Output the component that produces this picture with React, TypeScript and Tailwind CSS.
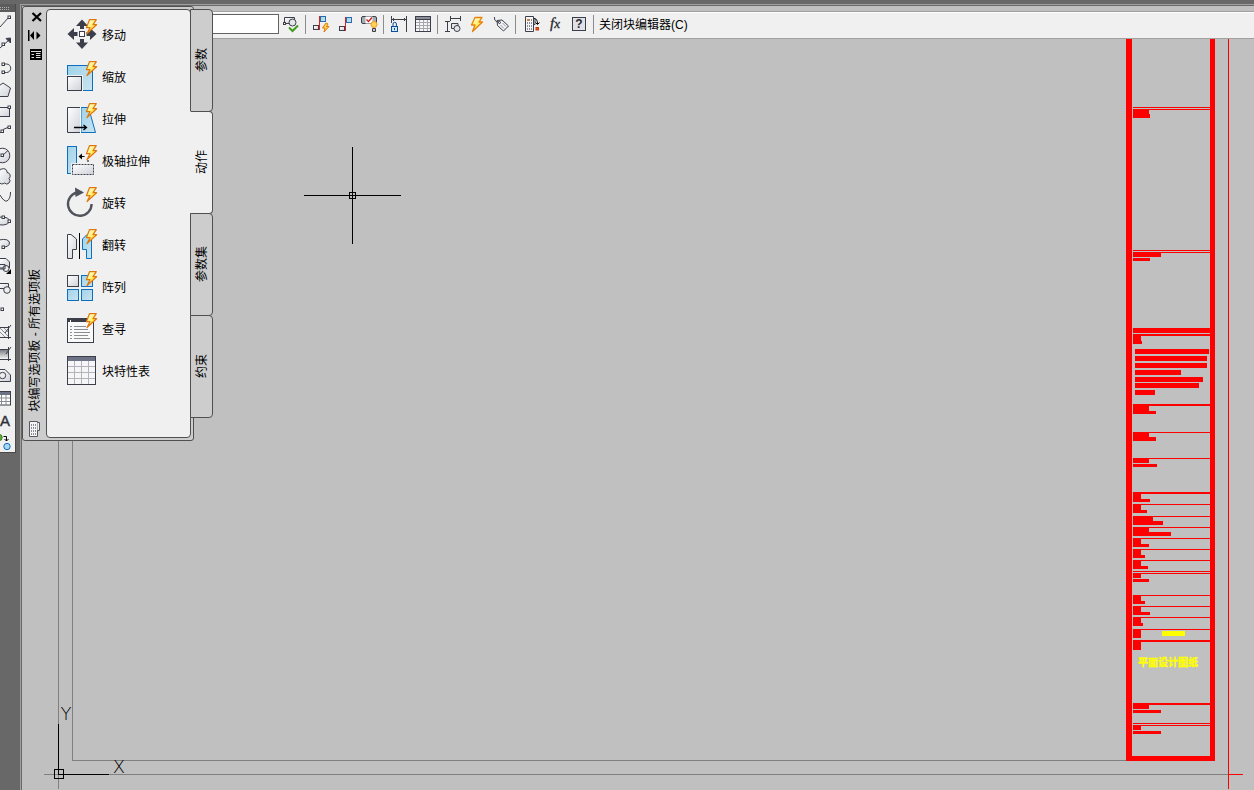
import { ReactNode, useState } from 'react';

type Box = [x: number, y: number, width: number, height: number];

const INK = '#3c3f4a';
const BLUE = '#0f6fbf';

/* ---------- shared drawings ---------- */

function Gradients() {
  return (
    <svg className="absolute h-0 w-0" aria-hidden="true">
      <defs>
        <linearGradient id="sky" x1="0" y1="0" x2="1" y2="1">
          <stop offset="0" stopColor="#9fd3ea" />
          <stop offset="1" stopColor="#c9e4f0" />
        </linearGradient>
        <linearGradient id="steel" x1="0" y1="0" x2="1" y2="1">
          <stop offset="0" stopColor="#ffffff" />
          <stop offset="1" stopColor="#cfd1d8" />
        </linearGradient>
        <linearGradient id="flash" x1="0" y1="0" x2="0.6" y2="1">
          <stop offset="0" stopColor="#ffffff" />
          <stop offset="0.5" stopColor="#fff27a" />
          <stop offset="1" stopColor="#ffd200" />
        </linearGradient>
        <linearGradient id="shade" x1="0" y1="0" x2="0" y2="1">
          <stop offset="0" stopColor="#6d7078" />
          <stop offset="1" stopColor="#f4f4f4" />
        </linearGradient>
      </defs>
    </svg>
  );
}

function Bolt() {
  return (
    <path
      d="M23.5 0.7 H30.3 L27 5.7 H30.6 L21 14.5 L24 8.7 H20.4 Z"
      fill="url(#flash)"
      stroke="#de780c"
      strokeWidth="1.2"
      strokeLinejoin="round"
    />
  );
}

/* ---------- palette actions ---------- */

const actions: { name: string; icon: ReactNode; plain?: boolean }[] = [
  {
    name: '移动',
    icon: (
      <g fill={INK}>
        <path d="M16 0.5 L22 7 H18 V10 H14 V7 H10 Z" />
        <path d="M16 30 L22 23.5 H18 V20 H14 V23.5 H10 Z" />
        <path d="M1.5 15 L8 9 V13 H11.5 V17 H8 V21 Z" />
        <path d="M30.5 15 L24 9 V13 H20.5 V17 H24 V21 Z" />
        <rect x="13.5" y="12.5" width="5" height="5" fill="#fff" stroke={INK} />
      </g>
    ),
  },
  {
    name: '缩放',
    icon: (
      <>
        <rect x="1.5" y="4.5" width="25" height="25" fill="url(#sky)" stroke={BLUE} />
        <rect x="1" y="14" width="16" height="16" fill="#f0f0f0" />
        <rect x="1.5" y="15.5" width="14" height="14" fill="url(#steel)" stroke={INK} />
      </>
    ),
  },
  {
    name: '拉伸',
    icon: (
      <>
        <path d="M15 4.5 H22.5 L29.5 29.5 H15 Z" fill="url(#sky)" stroke={BLUE} />
        <path d="M14.5 4.5 H1.5 V29.5 H14.5" fill="url(#steel)" stroke={INK} />
        <path d="M14.5 4 V30" stroke="#fff" />
        <path d="M8 24.5 H20 M17.5 22 L20.5 24.5 L17.5 27" fill="none" stroke="#000" strokeWidth="1.3" />
      </>
    ),
  },
  {
    name: '极轴拉伸',
    icon: (
      <>
        <rect x="1.5" y="1.5" width="9" height="27" fill="url(#sky)" stroke={BLUE} />
        <rect x="5" y="18" width="25" height="12" fill="#f0f0f0" />
        <rect x="6.5" y="19.5" width="21" height="10" fill="url(#steel)" stroke={INK} strokeDasharray="2 1" />
        <path d="M12.5 11.5 L16 8.5 V14.5 Z M16 11 H18.5 V12 H16 Z" fill="#000" />
        <path d="M22 17 v-2" stroke="#000" />
      </>
    ),
  },
  {
    name: '旋转',
    icon: (
      <>
        <path d="M25.6 17 A11.8 11.8 0 1 1 11 5.5" fill="none" stroke="#50535c" strokeWidth="2.4" />
        <path d="M9 0.5 L18 5.5 L9.5 10 Z" fill="#50535c" />
      </>
    ),
  },
  {
    name: '翻转',
    icon: (
      <>
        <path d="M1.5 5.5 H5 L10.5 10 V20.5 H6.5 V29.5 H1.5 Z" fill="url(#steel)" stroke={INK} />
        <path d="M25.5 5.5 H21 L16.5 10 V20.5 H20.5 V29.5 H25.5 Z" fill="url(#sky)" stroke={BLUE} />
        <path d="M13.5 4 V30" stroke="#000" />
      </>
    ),
  },
  {
    name: '阵列',
    icon: (
      <>
        <rect x="1.5" y="4.5" width="11" height="11" fill="url(#steel)" stroke={INK} />
        <rect x="15.5" y="4.5" width="11" height="11" fill="url(#sky)" stroke={BLUE} />
        <rect x="1.5" y="18.5" width="11" height="11" fill="url(#sky)" stroke={BLUE} />
        <rect x="15.5" y="18.5" width="11" height="11" fill="url(#sky)" stroke={BLUE} />
      </>
    ),
  },
  {
    name: '查寻',
    icon: (
      <>
        <rect x="1.5" y="5.5" width="26" height="24" fill="#fafafa" stroke={INK} />
        <rect x="1" y="5" width="27" height="4" fill={INK} />
        <path d="M4.5 7 V9" stroke="#fff" />
        <path
          d="M4 13.5 H6 M8 13.5 H20 M4 16.5 H6 M8 16.5 H22 M4 19.5 H6 M8 19.5 H24 M4 22.5 H6 M8 22.5 H22 M4 25.5 H6 M8 25.5 H24"
          stroke="#8b8d94"
        />
      </>
    ),
  },
  {
    name: '块特性表',
    plain: true,
    icon: (
      <>
        <rect x="1.5" y="1.5" width="28" height="28" fill="#f6f6f8" stroke={INK} />
        <rect x="2" y="2" width="27" height="4" fill="#6f7386" />
        <path d="M8.5 6 V29 M15.5 6 V29 M22.5 6 V29 M2 11.5 H29 M2 17.5 H29 M2 23.5 H29" stroke="#b3b4ba" />
      </>
    ),
  },
];

const tabs = ['参数', '动作', '参数集', '约束'];

function Palette() {
  const [activeTab, setActiveTab] = useState('动作');

  return (
    <aside className="absolute left-[22px] top-[6px] z-10 flex items-start" aria-label="块编写选项板">
      <div className="flex h-[435px] w-[172px] rounded-[3px] border border-[#505050] bg-[#cdcdcd] py-[2px] pr-[2px]">
        <div className="flex w-[23px] shrink-0 flex-col items-center">
          <button aria-label="关闭" className="h-[19px]">
            <svg className="h-[19px] w-[23px]" viewBox="0 0 23 19">
              <path d="M9.5 4 L18 12 M18 4 L9.5 12" stroke="#000" strokeWidth="2.2" />
            </svg>
          </button>
          <button aria-label="自动隐藏" className="h-[19px]">
            <svg className="h-[19px] w-[23px]" viewBox="0 0 23 19">
              <path d="M5 2 H6.5 V13 H5 Z M7 7.5 L11 3 V12 Z M17.5 7.5 L13.5 3.5 V11.5 Z" fill="#000" />
            </svg>
          </button>
          <button aria-label="特性" className="h-[19px]">
            <svg className="h-[19px] w-[23px]" viewBox="0 0 23 19">
              <path d="M7 2 H19 V13 H7 Z" fill="#000" />
              <path d="M8 4.5 H18 M8.5 7.5 H11 M8.5 10.5 H11 M13 6.5 H17.5 M13 8.5 H17.5 M13 10.5 H17.5" stroke="#d8d8d8" />
            </svg>
          </button>
          <h1 className="mb-[6px] mt-auto rotate-180 text-xs leading-4 whitespace-nowrap [text-orientation:sideways] [writing-mode:vertical-rl]">
            块编写选项板 - 所有选项板
          </h1>
          <svg className="h-5 w-[23px] shrink-0" viewBox="0 0 23 20" aria-hidden="true">
            <path d="M6.5 3.5 H14.5 V18.5 H6.5 Z" fill="#f6f6f6" stroke="#555860" />
            <path d="M14.5 4.5 H16.5 V12.5 H14.5" fill="#f6f6f6" stroke="#555860" />
            <path d="M8.5 6 V17 M10.5 6 V17 M12.5 6 V17" stroke="#8b8d94" strokeDasharray="2 1" />
          </svg>
        </div>

        <ul className="flex-1 rounded-[4px] border border-[#505050] bg-[#f0f0f0] pt-1 pl-[19px]">
          {actions.map((action) => (
            <li key={action.name}>
              <button className="flex h-[42px] w-full items-center gap-1 text-xs">
                <svg className="h-8 w-8 shrink-0" viewBox="0 0 32 32">
                  {action.icon}
                  {!action.plain && <Bolt />}
                </svg>
                <span className="pt-[2px]">{action.name}</span>
              </button>
            </li>
          ))}
        </ul>
      </div>

      <div role="tablist" className="-ml-1 flex flex-col pt-[4px]">
        {tabs.map((tab) => (
          <button
            key={tab}
            role="tab"
            aria-selected={tab === activeTab}
            onClick={() => setActiveTab(tab)}
            className={`-mt-px flex h-[103px] w-[23px] items-center justify-center rounded-r-[4px] border border-[#505050] ${
              tab === activeTab ? 'border-l-[#f0f0f0] bg-[#f0f0f0]' : 'bg-[#cdcdcd]'
            }`}
          >
            <span className="rotate-180 text-xs leading-4 [text-orientation:sideways] [writing-mode:vertical-rl]">
              {tab}
            </span>
          </button>
        ))}
      </div>
    </aside>
  );
}

/* ---------- left draw toolbar ---------- */

function Grip({ x, y }: { x: number; y: number }) {
  return <rect x={x - 1} y={y - 1} width="2.5" height="2.5" fill="#fff" stroke={INK} />;
}

const drawTools: { name: string; icon: ReactNode }[] = [
  { name: '直线', icon: <><path d="M0 15 L9 5" /><Grip x={9} y={5} /></> },
  { name: '构造线', icon: <><path d="M0 14 L9 6" /><path d="M10.5 4 V9 L6 4.5 Z" fill={INK} /><Grip x={3} y={10} /></> },
  { name: '多段线', icon: <><path d="M4 8 H6.5 a4 4 0 0 1 0 8.5 H3" /><Grip x={3} y={8} /><Grip x={3} y={16} /></> },
  { name: '多边形', icon: <path d="M-4 10 L3 5 L10.5 10 L8 18.5 H-2 Z" fill="url(#steel)" /> },
  { name: '矩形', icon: <><rect x="-4" y="7.5" width="13.5" height="9" fill="url(#steel)" /><Grip x={9} y={7} /></> },
  { name: '圆弧', icon: <><path d="M-1 12 Q3 6 9 5" /><Grip x={2} y={9} /><Grip x={9} y={5} /></> },
  { name: '圆', icon: <><circle cx="2.5" cy="11.5" r="7.3" fill="url(#steel)" /><path d="M2.5 11.5 L8 6.5" /><Grip x={2} y={11} /></> },
  { name: '修订云线', icon: <path d="M-1 6 a4 3.6 0 0 1 8 0.5 a3.4 3.4 0 0 1 2 6 a3 3 0 0 1 -4.5 4.5 a3.5 3.5 0 0 1 -5.5 -1" fill="url(#steel)" /> },
  { name: '样条曲线', icon: <path d="M0 7 Q4 14 7 13 Q10.5 11 10.5 4" /> },
  { name: '椭圆', icon: <><ellipse cx="2" cy="11" rx="7.5" ry="4" fill="url(#steel)" /><Grip x={9} y={11} /><Grip x={3} y={7} /></> },
  { name: '椭圆弧', icon: <><path d="M-1 8 Q9 6 9.5 11 Q9 15 3.5 15" fill="url(#steel)" /><Grip x={3} y={15} /></> },
  { name: '插入块', icon: <><path d="M0 4.5 H6 L9.5 8 V14 H0" fill="url(#steel)" /><circle cx="6" cy="14.5" r="3" fill="#eee" /><path d="M0 10.5 H5 V15 H0" /><path d="M11 15 V20 H6 Z" fill="#000" stroke="none" /></> },
  { name: '创建块', icon: <><path d="M0 7.5 H8.5 V12.5 H0" fill="url(#steel)" /><circle cx="7" cy="14" r="3.3" fill="#eee" /></> },
  { name: '点', icon: <Grip x={2} y={11} /> },
  { name: '图案填充', icon: <><path d="M0 8 L8 16 M0 12 L5 17 M4 8 L8 12" stroke="#8b8d94" /><path d="M0 17.5 H11 M8.5 6 V19 M0 7.5 H8 M11 5 L5 13" /></> },
  { name: '渐变色', icon: <><rect x="-2" y="7" width="10.5" height="10" fill="url(#shade)" stroke="none" /><path d="M0 17.5 H11 M8.5 5 V19 M0 7.5 H8 M11 5 L6 12" /></> },
  { name: '面域', icon: <><path d="M-2 5.5 H5 L10.5 11 V17.5 H-2 Z" fill="url(#steel)" /><circle cx="2.5" cy="11.5" r="3.2" fill="#eee" /></> },
  { name: '表格', icon: <><rect x="-3" y="5.5" width="13.5" height="13.5" fill="#fff" /><path d="M-2 7.5 H10" strokeWidth="3" stroke="#6f7386" /><path d="M1.5 9 V19 M6 9 V19 M0 12 H10 M0 15.5 H10" stroke="#8b8d94" /></> },
  { name: '多行文字', icon: <text x="0" y="18" fontSize="15" fill="#2e3038" stroke="#2e3038" strokeWidth="0.4">A</text> },
  { name: '添加选定对象', icon: <><circle cx="-1" cy="7.5" r="3.2" fill="#5fae3a" stroke="#3c7d22" /><path d="M3.5 6.5 H6.5 V11 M4.5 9 L6.5 11 L8.5 9" stroke="#000" /><circle cx="7" cy="16.5" r="3.2" fill="#a9d7f5" stroke={BLUE} /></> },
];

function DrawToolbar() {
  return (
    <nav aria-label="绘图" className="w-4 self-start border-r border-b border-[#4a4a4a] bg-[#f0f0f0]">
      <svg className="block h-2 w-[15px] bg-[#5c5c5c]" aria-hidden="true">
        <path d="M0 3.5 H9 M0 5.5 H9" stroke="#b0b0b0" strokeDasharray="1 1" />
      </svg>
      {drawTools.map((tool) => (
        <button key={tool.name} aria-label={tool.name} className="block h-[22px] w-[15px]">
          <svg className="block h-[22px] w-[15px]" viewBox="0 0 15 22" fill="none" stroke={INK}>
            {tool.icon}
          </svg>
        </button>
      ))}
    </nav>
  );
}

/* ---------- top block editor toolbar ---------- */

const editorGroups: { name: string; icon: ReactNode }[][] = [
  [
    {
      name: '测试块',
      icon: (
        <>
          <path d="M5.5 4.5 H15.5 V10.5 H5.5 Z" fill="url(#steel)" />
          <circle cx="13.5" cy="9.5" r="3.5" fill="#e6e7ea" />
          <rect x="4.5" y="9.5" width="2" height="2" fill="#fff" />
          <path d="M10 14.5 L13.5 18 L19 12.5" stroke="#3f9b1c" strokeWidth="2" />
        </>
      ),
    },
  ],
  [
    {
      name: '自动约束',
      icon: (
        <>
          <rect x="11.5" y="3.5" width="5" height="5" fill="url(#sky)" stroke="#2a6ca8" />
          <rect x="4.5" y="12.5" width="5" height="4" fill="url(#steel)" />
          <path d="M10.5 3 V17" stroke="#e02020" />
          <path d="M17 10 L13.5 15 H16 L15 19 L20 13.5 H17.5 L19 11 Z" fill="#ffd34d" stroke="#e07b0c" />
        </>
      ),
    },
    {
      name: '几何约束',
      icon: (
        <>
          <rect x="13.5" y="4.5" width="5" height="5" fill="url(#sky)" stroke="#2a6ca8" />
          <rect x="6.5" y="13.5" width="5" height="4" fill="url(#steel)" />
          <path d="M12.5 4 V18" stroke="#e02020" />
        </>
      ),
    },
    {
      name: '约束栏',
      icon: (
        <>
          <rect x="4.5" y="3.5" width="15" height="7" rx="1.5" fill="#a9abb3" />
          <rect x="8.5" y="3.5" width="7" height="7" fill="#fff" stroke="none" />
          <path d="M9.5 6.5 L11.5 8.5 L15 4.5" stroke="#d01818" strokeWidth="1.3" />
          <circle cx="17" cy="11.5" r="3" fill="#ffd25a" stroke="#ef9a1a" />
          <path d="M15.5 15.5 H18.5 V18.5 H15.5 Z" fill="#c7c8cd" />
        </>
      ),
    },
  ],
  [
    {
      name: '参数约束',
      icon: (
        <>
          <path d="M4.5 3 V10 M19.5 3 V19 M5 6.5 H19 M7 5 L5.5 6.5 L7 8 M17 5 L18.5 6.5 L17 8" />
          <path d="M6 13.5 V11 a1.7 1.7 0 0 1 3.4 0 V13.5" stroke="#0b4f96" />
          <rect x="4.5" y="13.5" width="6" height="5" fill="#cfe6f7" stroke="#0b4f96" />
          <path d="M7.5 15 V17" stroke="#0b4f96" />
        </>
      ),
    },
    {
      name: '块表',
      icon: (
        <>
          <rect x="4.5" y="3.5" width="15" height="15" fill="#f6f6f8" />
          <rect x="5" y="4" width="14" height="2" fill="#8b8d9b" stroke="none" />
          <path d="M8.5 7 V18 M12.5 7 V18 M16.5 7 V18 M5 9.5 H19 M5 12.5 H19 M5 15.5 H19" stroke="#a6a8ae" />
          <path d="M5 6.5 H19" />
        </>
      ),
    },
  ],
  [
    {
      name: '参数',
      icon: (
        <>
          <path d="M9.5 3 V8 M19.5 3 V8 M10 5.5 H19 M4 8.5 H9 M4 18.5 H9 M6.5 9 V18" />
          <path d="M10.5 10.5 H17 V15.5 H10.5 Z" fill="#e6e7ea" />
          <circle cx="16" cy="15.5" r="3" fill="#e6e7ea" />
        </>
      ),
    },
    {
      name: '动作',
      icon: (
        <path
          d="M10 4.5 H17 L14 9 H17.5 L7.5 18.5 L10 12 H6.5 Z"
          fill="url(#flash)"
          stroke="#e8820c"
          strokeWidth="1.3"
          strokeLinejoin="round"
        />
      ),
    },
    {
      name: '定义属性',
      icon: (
        <>
          <path d="M8 7.5 L13 7 L19.5 13 L14.5 18 L8.5 12.5 Z" fill="#f2f2f4" />
          <circle cx="10.5" cy="9.5" r="1" />
          <path d="M10 9 Q5 9 5.5 4" />
          <path d="M11.5 12 L15 15.5 M13.5 10 L17 13.5" stroke="#9a9ca4" />
        </>
      ),
    },
  ],
  [
    {
      name: '编写选项板',
      icon: (
        <>
          <path d="M6.5 3.5 H14.5 V18.5 H6.5 Z" fill="#f6f6f8" />
          <path d="M14.5 5.5 H16 V11.5 H14.5" />
          <path d="M8.5 6 V17 M10.5 6 V17 M12.5 6 V17" stroke="#8b8d94" strokeDasharray="2 1" />
          <path d="M8 7 H10" stroke="#ef7a1a" strokeWidth="2" />
          <path d="M15.5 5.5 Q18.5 6 18.5 11 M16.5 9.5 L18.5 11.5 L20.5 9.5" stroke="#000" />
          <rect x="17" y="14.5" width="2.5" height="2.5" fill="#f0581a" stroke="#c23c0a" />
        </>
      ),
    },
    {
      name: '参数管理器',
      icon: (
        <text
          x="7"
          y="15"
          fill="#26282e"
          stroke="#26282e"
          strokeWidth="0.3"
          className="font-['Liberation_Serif',serif] italic"
          fontSize="15"
        >
          f<tspan fontSize="13">x</tspan>
        </text>
      ),
    },
    {
      name: '了解动态块',
      icon: (
        <>
          <rect x="5.5" y="4.5" width="13" height="13" fill="#dfe1e6" />
          <text x="12" y="15" textAnchor="middle" fontSize="12" fontWeight="bold" fill="#26282e" stroke="none">
            ?
          </text>
        </>
      ),
    },
  ],
];

function EditorToolbar() {
  return (
    <header className="flex h-[27px] items-start border-t border-b border-t-white border-b-[#a0a0a0] bg-[#f0f0f0] pl-[98px]">
      <input
        aria-label="块名"
        className="mt-px h-5 w-[159px] border border-[#646464] bg-white px-1 text-xs outline-none"
      />
      {editorGroups.map((group) => (
        <div key={group[0].name} className="flex">
          {group.map((tool) => (
            <button key={tool.name} aria-label={tool.name} className="h-6 w-6">
              <svg className="block h-6 w-6" viewBox="0 0 24 24" fill="none" stroke={INK}>
                {tool.icon}
              </svg>
            </button>
          ))}
          <span className="mt-[2px] mr-[3px] ml-[2px] h-[19px] w-px bg-[#8c8c8c]" />
        </div>
      ))}
      <button className="h-6 px-[2px] text-xs whitespace-nowrap">关闭块编辑器(C)</button>
    </header>
  );
}

/* ---------- model space ---------- */

// full-width rules of the title block: [y, thickness]
const rules = [
  [107, 1], [109, 1], [250, 1], [252, 1], [328, 5], [334, 2], [404, 2], [432, 1], [458, 1],
  [492, 2], [504, 1], [516, 1], [527, 1], [538, 1], [549, 1], [560, 1], [571, 1], [573, 1],
  [595, 1], [606, 1], [617, 1], [629, 1], [640, 2], [703, 2], [723, 1], [725, 1],
];

const fields: Box[] = [
  [1133, 110, 16, 4], [1133, 114, 17, 4],
  [1133, 253, 28, 4], [1133, 258, 17, 3],
  [1133, 336, 8, 5], [1133, 341, 9, 3],
  [1135, 349, 74, 5], [1135, 356, 72, 5], [1135, 363, 72, 5], [1135, 370, 46, 5],
  [1135, 377, 68, 5], [1135, 383, 64, 5], [1135, 390, 20, 5],
  [1133, 406, 16, 5], [1133, 411, 23, 3],
  [1133, 433, 16, 4], [1133, 437, 23, 4],
  [1133, 459, 16, 4], [1133, 464, 24, 3],
  [1133, 494, 8, 5], [1133, 499, 17, 3],
  [1133, 505, 8, 5], [1133, 510, 14, 3],
  [1133, 517, 20, 4], [1133, 521, 30, 4],
  [1133, 528, 16, 4], [1133, 532, 38, 4],
  [1133, 539, 8, 5], [1133, 544, 16, 3],
  [1133, 550, 8, 5], [1133, 555, 12, 3],
  [1133, 561, 8, 5], [1133, 566, 15, 3],
  [1133, 574, 8, 4], [1133, 579, 16, 3],
  [1133, 596, 8, 5], [1133, 601, 12, 3],
  [1133, 607, 8, 5], [1133, 612, 17, 3],
  [1133, 618, 8, 5], [1133, 623, 10, 3],
  [1133, 630, 8, 8], [1133, 642, 8, 8],
  [1133, 705, 16, 4], [1133, 710, 28, 3],
  [1133, 726, 8, 4], [1133, 731, 28, 3],
];

function ModelSpace() {
  return (
    <main className="relative min-h-0 flex-1 bg-[#c0c0c0]">
      <svg className="absolute inset-0 h-full w-full" shapeRendering="crispEdges">
        <g transform="translate(-22 -39)">
          {/* sheet edges */}
          <path d="M58.5 39 V789 M44 774.5 H1228 M72.5 39 V760.5 H1126" fill="none" stroke="#808080" />

          {/* title block */}
          <g fill="#f00">
            <rect x="1126" y="39" width="6" height="722" />
            <rect x="1210" y="39" width="5" height="722" />
            <rect x="1126" y="756" width="89" height="5" />
            <rect x="1228" y="39" width="1" height="750" />
            <rect x="1228" y="774" width="15" height="1" />
            {rules.map(([y, height]) => (
              <rect key={y} x="1133" y={y} width="77" height={height} />
            ))}
            {fields.map(([x, y, width, height]) => (
              <rect key={y} x={x} y={y} width={width} height={height} />
            ))}
          </g>
          <rect x="1162" y="631" width="23" height="5" fill="#ff0" />
          <text x="1138" y="666" fontSize="10" fontWeight="700" fill="#ff0" stroke="#ff0" strokeWidth="0.4">
            平面设计图纸
          </text>

          {/* UCS icon */}
          <path d="M58.5 724 V774.5 H109 M54.5 769.5 H63.5 V778.5 H54.5 Z" fill="none" stroke="#000" />
          <g className="font-['DejaVu_Sans',sans-serif] font-extralight" fontSize="18" textAnchor="middle">
            <text x="66" y="720">Y</text>
            <text x="119" y="773">X</text>
          </g>

          {/* crosshair */}
          <path
            d="M304 195.5 H401 M352.5 147 V244 M349.5 192.5 H355.5 V198.5 H349.5 Z"
            fill="none"
            stroke="#000"
          />
        </g>
      </svg>
    </main>
  );
}

export default function App() {
  return (
    <div className="relative flex h-screen overflow-hidden bg-[#686868] pt-1 font-['Liberation_Sans','Noto_Sans_CJK_SC',sans-serif] text-black">
      <Gradients />
      <DrawToolbar />
      <div className="ml-1 flex min-w-0 flex-1 flex-col border-t border-l border-[#a0a0a0]">
        <div className="flex min-h-0 flex-1 flex-col border-t border-l border-[#686868]">
          <div className="h-[6px] shrink-0 border-b border-[#a0a0a0] bg-[#c0c0c0]" />
          <EditorToolbar />
          <ModelSpace />
        </div>
      </div>
      <Palette />
    </div>
  );
}
